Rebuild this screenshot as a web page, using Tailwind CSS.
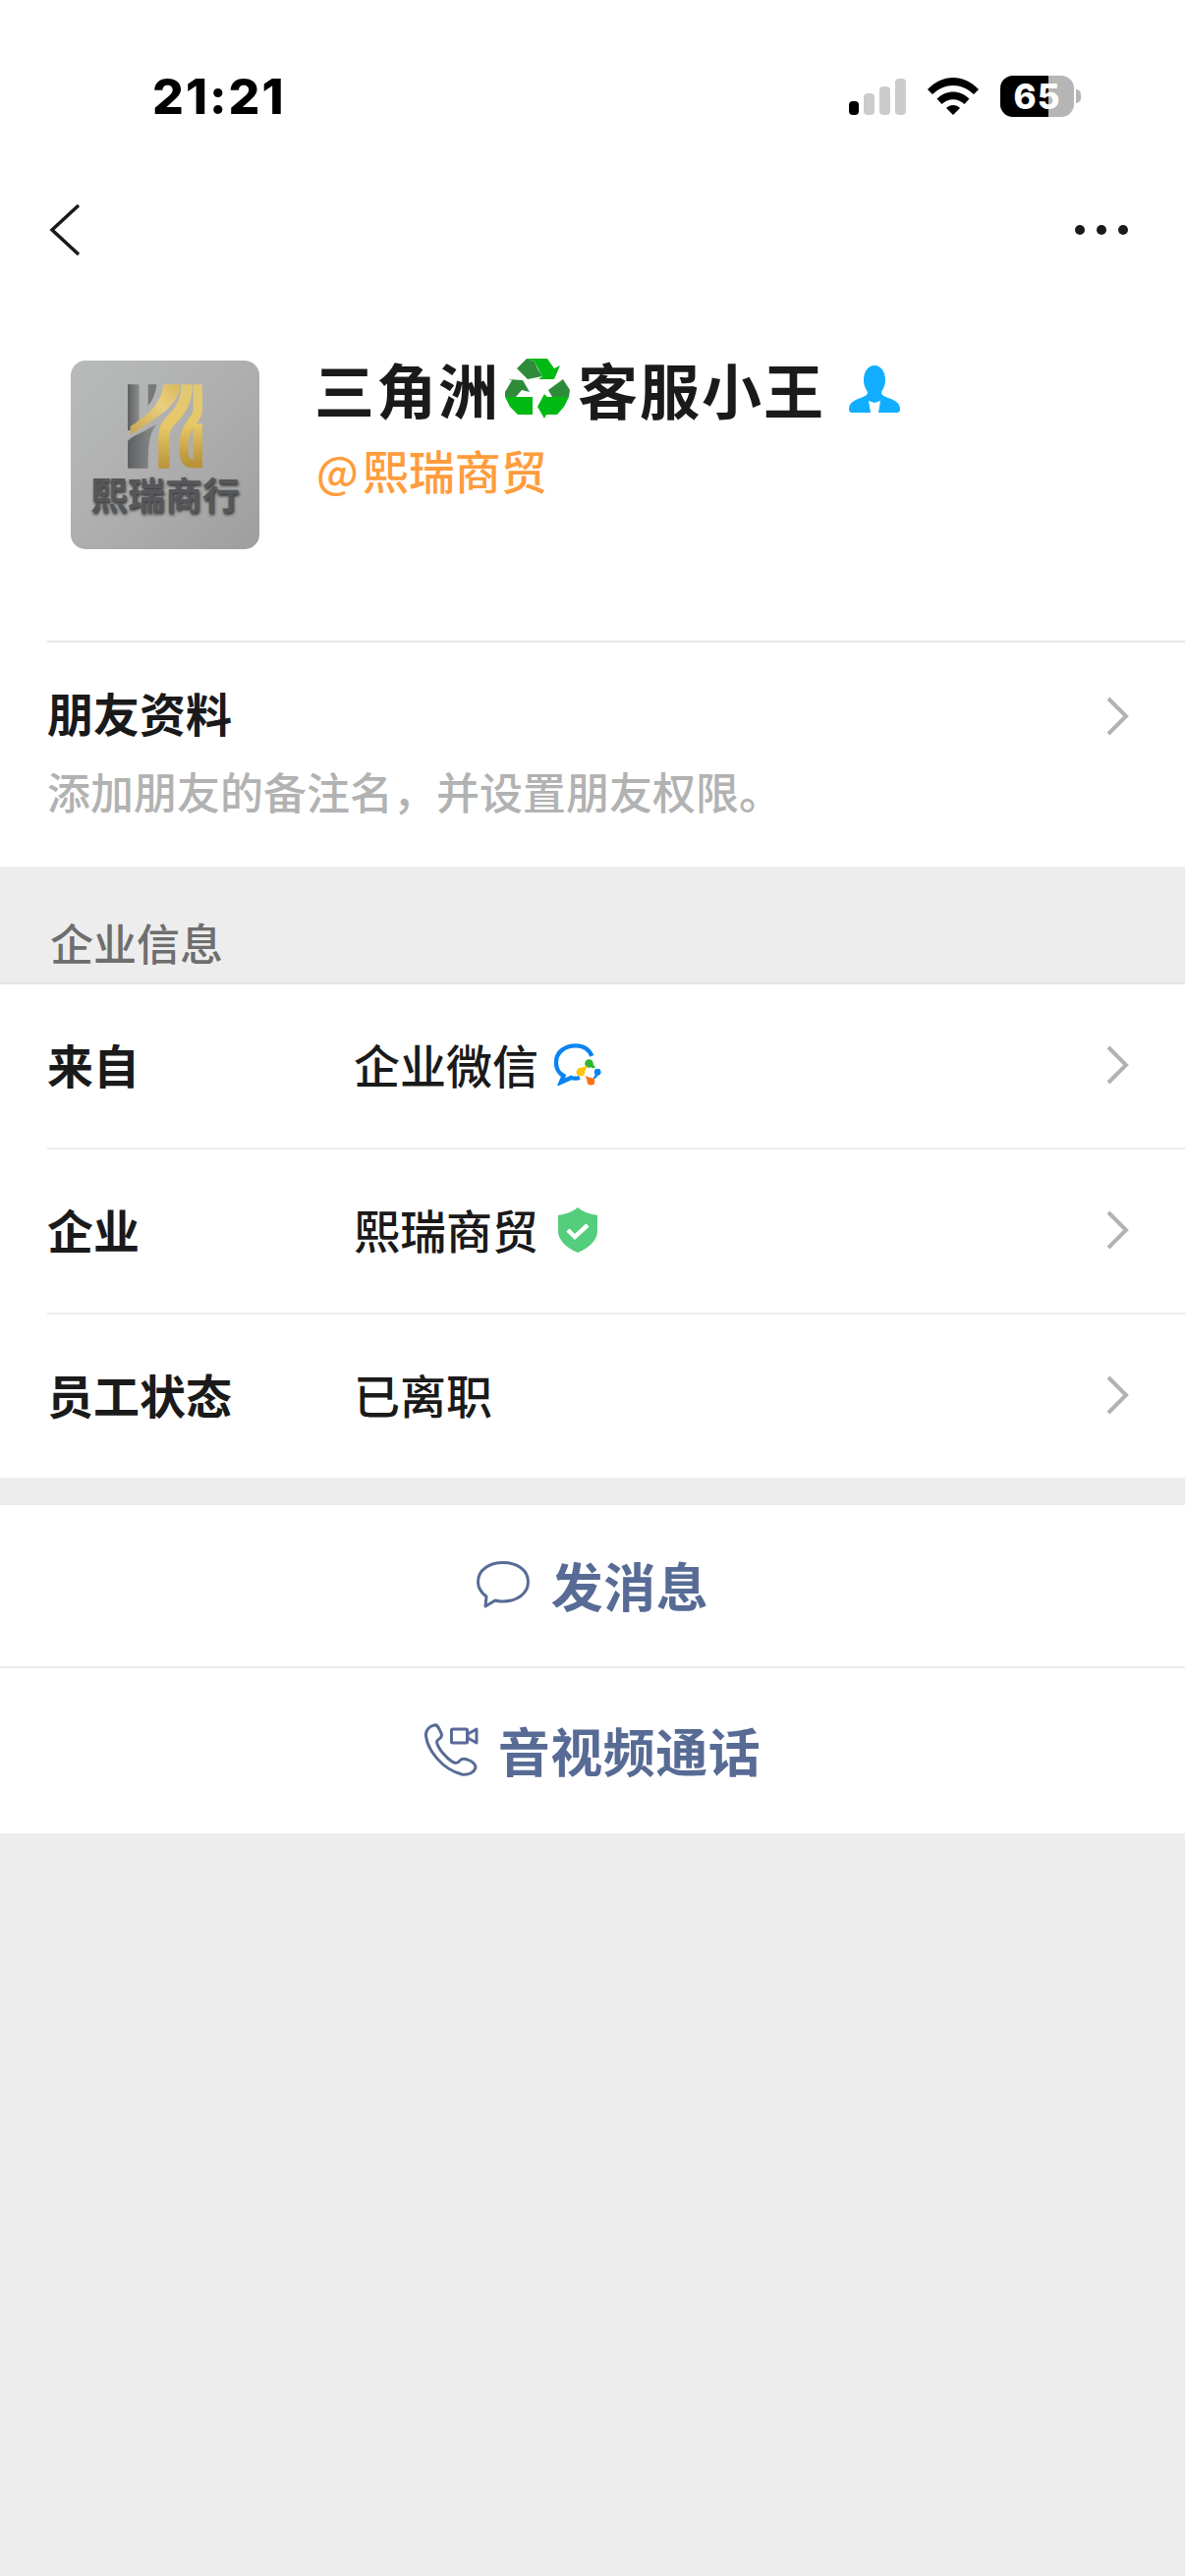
<!DOCTYPE html>
<html lang="zh">
<head>
<meta charset="utf-8">
<script src="https://cdn.jsdelivr.net/npm/@tailwindcss/browser@4"></script>
</head>
<body class="w-[1206px] h-[2622px] bg-[#ededed] text-[#1a1a1a] overflow-hidden font-['Noto_Sans_CJK_SC','Noto_Sans',sans-serif]">

<!-- status bar -->
<div class="bg-white h-[160px] flex items-start justify-between pl-[155px] pr-[106px] pt-[70px]">
  <span class="font-['Inter',sans-serif] font-extrabold text-[50px] leading-[56px] text-black tracking-[2px]">21:21</span>
  <div class="flex items-center gap-[22px] pt-[7px]">
    <div class="flex items-end gap-[5px] h-[37px]">
      <span class="w-[10px] h-[14px] rounded-[4px] bg-black"></span>
      <span class="w-[11px] h-[22px] rounded-[4px] bg-[#cccccc]"></span>
      <span class="w-[11px] h-[29px] rounded-[4px] bg-[#cccccc]"></span>
      <span class="w-[11px] h-[37px] rounded-[4px] bg-[#cccccc]"></span>
    </div>
    <svg width="52" height="38" viewBox="0 0 52 38"><path d="M0 12 C15 -4 37 -4 52 12 L47 17 C34 5 18 5 5 17 Z" fill="#000"/><path d="M9.5 21.5 C19 12 33 12 42.500 21.500 L37.500 27 C31 20.500 21 20.500 14.500 27 Z" fill="#000"/><path d="M19 31 C23 27 29 27 33 31 L26 38 Z" fill="#000"/></svg>
    <div class="flex items-center gap-[2px]">
      <div class="relative w-[75px] h-[42px] rounded-[13px] bg-[#b5b5b5] overflow-hidden flex items-center justify-center">
        <span class="absolute left-0 top-0 h-full w-[49px] bg-black"></span>
        <span class="relative font-['Inter',sans-serif] font-extrabold text-[35px] leading-[42px] text-white tracking-[1px]">65</span>
      </div>
      <span class="w-[5px] h-[14px] rounded-r-full bg-[#b5b5b5]"></span>
    </div>
  </div>
</div>

<!-- nav -->
<div class="bg-white h-[150px] flex items-start justify-between pl-[50px] pr-[58px] pt-[47px]">
  <svg width="32" height="54" viewBox="0 0 32 54" fill="none"><path d="M30 2 L3 27 L30 52" stroke="#1a1a1a" stroke-width="3.500"/></svg>
  <div class="flex items-center gap-[12px] pt-[22px]">
    <span class="w-[10px] h-[10px] rounded-full bg-[#1a1a1a]"></span>
    <span class="w-[10px] h-[10px] rounded-full bg-[#1a1a1a]"></span>
    <span class="w-[10px] h-[10px] rounded-full bg-[#1a1a1a]"></span>
  </div>
</div>

<!-- profile -->
<div class="bg-white h-[342px] flex items-start pl-[72px] pt-[57px] gap-[56px]">
  <div class="w-[192px] h-[192px] rounded-[15px] bg-[linear-gradient(135deg,#b9bbbb_0%,#adadad_55%,#9e9e9e_100%)] flex flex-col items-center pt-[24px] shrink-0 overflow-hidden">
    <svg width="76" height="86" viewBox="0 0 227 256" fill="none">
      <defs>
        <linearGradient id="g1" x1="0" y1="1" x2="1" y2="0"><stop offset="0" stop-color="#c9a650"/><stop offset="0.6" stop-color="#e9cf7e"/><stop offset="1" stop-color="#d9b85e"/></linearGradient>
        <linearGradient id="g2" x1="0" y1="1" x2="0" y2="0"><stop offset="0" stop-color="#b8933a"/><stop offset="0.5" stop-color="#e8c866"/><stop offset="1" stop-color="#e0c877"/></linearGradient>
        <linearGradient id="g3" x1="0" y1="0" x2="1" y2="0"><stop offset="0" stop-color="#5d5f60"/><stop offset="1" stop-color="#8c8e8f"/></linearGradient>
      </defs>
      <path d="M0 0 H35 V122 L8 140 H0 Z" fill="url(#g3)"/>
      <path d="M62 0 H88 C85 25 76 48 62 65 Z" fill="#76787a"/>
      <path d="M108 0 H160 C158 40 130 70 100 92 C70 115 35 135 8 154 V128 C50 100 105 60 108 0 Z" fill="url(#g1)"/>
      <path d="M0 172 C20 152 50 146 70 130 L88 122 C66 150 62 175 62 256 H0 Z" fill="url(#g3)"/>
      <path d="M180 0 C180 40 166 75 136 105 C108 132 110 150 110 190 V256" stroke="url(#g2)" stroke-width="34"/>
      <path d="M213 0 V80 C213 105 170 125 170 190 C170 235 182 241 200 241 H213 V120" stroke="url(#g2)" stroke-width="28"/>
    </svg>
    <span class="mt-[4px] whitespace-nowrap text-[38px] leading-[42px] font-bold text-[#55575a] [text-shadow:1px_2px_3px_#333333]">熙瑞商行</span>
  </div>
  <div class="flex flex-col -mt-[5px]">
    <div class="flex items-center h-[68px]">
      <span class="text-[61px] leading-[68px] font-bold tracking-[2px] whitespace-nowrap">三角洲</span>
      <svg class="ml-[5px] mr-[7px] mb-[2px] shrink-0" width="67" height="62" viewBox="15 10 67 62">
        <path d="M27 21 L37 11 L45 14 L48 21 L53 29 L38 32 Z" fill="#2e8b3a"/>
        <path d="M37 11 H58 L65 21 L71 18 L65 32 H49 L53 29 L48 20 L45 14 Z" fill="#00b912"/>
        <path d="M18 32 L33 33 L40 45 L32 43 L26 50 H15 L15 45 L22 33 Z" fill="#2e8b3a"/>
        <path d="M15 50 H43 V68 H28 L20 60 Z" fill="#00b912"/>
        <path d="M59 43 L74 32 L81 43 L80 50 H63 Z" fill="#2e8b3a"/>
        <path d="M58 50 H80 L75 60 L68 68 H57 L55 72 L48 60 L55 47 Z" fill="#00b912"/>
      </svg>
      <span class="text-[61px] leading-[68px] font-bold tracking-[2px] whitespace-nowrap">客服小王</span>
      <svg class="ml-[24px] shrink-0" width="52" height="48" viewBox="0 0 52 48">
        <path d="M26 0 C33 0 37 7 37 15 C37 21 34 25 33 27 C33 30 35 31 40 33 C46 35 52 38 52 44 C52 47 51 48 48 48 H4 C1 48 0 47 0 44 C0 38 6 35 12 33 C17 31 19 30 19 27 C18 25 15 21 15 15 C15 7 19 0 26 0 Z" fill="#11aeff"/>
        <path d="M20 36 L26 38 L32 36 L30 48 H22 Z" fill="#ffffff"/>
      </svg>
    </div>
    <span class="mt-[21px] ml-[2px] flex items-center gap-[4px] text-[46px] leading-[54px] text-[#ff9c3c] whitespace-nowrap font-medium"><span class="text-[44px]">@</span><span class="text-[47px]">熙瑞商贸</span></span>
  </div>
</div>

<!-- friend info -->
<div class="bg-white h-[230px] pl-[48px]">
  <div class="relative border-t-2 border-[#e8e8e8] h-full pt-[42px]">
    <div class="text-[47px] leading-[58px] font-bold">朋友资料</div>
    <div class="mt-[22px] text-[44px] leading-[58px] text-[#b2b2b2] font-medium">添加朋友的备注名，并设置朋友权限。</div>
    <svg class="absolute left-[1077px] top-[54px]" width="25" height="42" viewBox="0 0 25 42" fill="none"><path d="M3 3 L21 21 L3 39" stroke="#b2b2b2" stroke-width="4"/></svg>
  </div>
</div>

<!-- section header -->
<div class="h-[118px] pl-[51px] pt-[48px] text-[44px] leading-[58px] text-[#6e6e6e] font-medium">企业信息</div>

<!-- rows -->
<div class="bg-white border-t-2 border-[#e4e4e4] h-[504px] pl-[48px] flex flex-col">
  <div class="flex-1 flex items-center pr-[56px] border-b-2 border-[#ececec] pb-[3px]">
    <span class="w-[312px] text-[47px] font-bold">来自</span>
    <span class="text-[47px] font-medium">企业微信</span>
    <svg class="ml-[16px]" width="48" height="43" viewBox="0 0 50 44">
      <path d="M23 2 C11 2 2 9 2 20 C2 27 6 32 10 34 L7 41 L18 36 C21 37 24 37 27 36" fill="none" stroke="#0a84f0" stroke-width="4.500"/>
      <path d="M23 2 C31 2 37 6 40 13" fill="none" stroke="#0a84f0" stroke-width="4.500"/>
      <circle cx="37" cy="21" r="4.500" fill="#2db52d"/><path d="M37 17 L44 25 L40 26 Z" fill="#2db52d"/>
      <circle cx="28" cy="30" r="4.500" fill="#ffc40c"/><path d="M25 27 L35 23 L33 29 Z" fill="#ffc40c"/>
      <circle cx="46" cy="30" r="3.500" fill="#0a84f0"/><path d="M42 37 L48 28 L45 34 Z" fill="#0a84f0" stroke="#0a84f0" stroke-width="2"/>
      <circle cx="39" cy="40" r="4" fill="#ff7014"/><path d="M33 34 L43 38 L36 42 Z" fill="#ff7014"/>
    </svg>
    <svg class="ml-auto" width="25" height="42" viewBox="0 0 25 42" fill="none"><path d="M3 3 L21 21 L3 39" stroke="#b2b2b2" stroke-width="4"/></svg>
  </div>
  <div class="flex-1 flex items-center pr-[56px] border-b-2 border-[#ececec] pb-[3px]">
    <span class="w-[312px] text-[47px] font-bold">企业</span>
    <span class="text-[47px] font-medium">熙瑞商贸</span>
    <svg class="ml-[20px]" width="40" height="46" viewBox="0 0 40 46">
      <path d="M20 0 C26 5 33 7 40 8 V24 C40 34 30 42 20 46 C10 42 0 34 0 24 V8 C7 7 14 5 20 0 Z" fill="#54cd7c"/>
      <path d="M10 23 L17 30 L30 18" fill="none" stroke="#fff" stroke-width="4.500"/>
    </svg>
    <svg class="ml-auto" width="25" height="42" viewBox="0 0 25 42" fill="none"><path d="M3 3 L21 21 L3 39" stroke="#b2b2b2" stroke-width="4"/></svg>
  </div>
  <div class="flex-1 flex items-center pr-[56px] pb-[3px]">
    <span class="w-[312px] text-[47px] font-bold">员工状态</span>
    <span class="text-[47px] font-medium">已离职</span>
    <svg class="ml-auto" width="25" height="42" viewBox="0 0 25 42" fill="none"><path d="M3 3 L21 21 L3 39" stroke="#b2b2b2" stroke-width="4"/></svg>
  </div>
</div>

<!-- actions -->
<div class="mt-[28px] bg-white">
  <div class="h-[166px] flex items-center justify-center gap-[22px] border-b-2 border-[#ececec] text-[#576b95] pb-[2px]">
    <svg width="54" height="48" viewBox="0 0 54 48" fill="none"><path d="M27 1.500 C13 1.500 1.500 9 1.500 21 C1.500 28 6 33 10 36 L9 46 L19 40 C22 41 24 41 27 41 C41 41 52.500 33 52.500 21 C52.500 9 41 1.500 27 1.500 Z" stroke="#576b95" stroke-width="3" stroke-linejoin="round"/></svg>
    <span class="text-[53px] leading-[60px] font-bold tracking-[0.5px]">发消息</span>
  </div>
  <div class="h-[168px] flex items-center justify-center gap-[20px] text-[#576b95] pb-[2px]">
    <svg width="55" height="54" viewBox="0 0 55 54" fill="none" stroke="#576b95" stroke-width="3" stroke-linejoin="round">
      <path d="M10 2 C5 3 1 7 1.500 13 C3 27 18 47 38 52 C45 53 51 50 52 45 C52 42 50 40 46 38 C42 36 38 36 36 38 C34 41 31 41 28 39 C22 35 15 27 13 21 C12 19 13 17 15 16 C18 14 18 11 16 8 C14 4 13 1 10 2 Z"/>
      <rect x="27.500" y="6" width="16" height="14" rx="1"/>
      <path d="M44 11 L53 6 V20 L44 15 Z"/>
    </svg>
    <span class="text-[53px] leading-[60px] font-bold tracking-[0.5px]">音视频通话</span>
  </div>
</div>

</body>
</html>
